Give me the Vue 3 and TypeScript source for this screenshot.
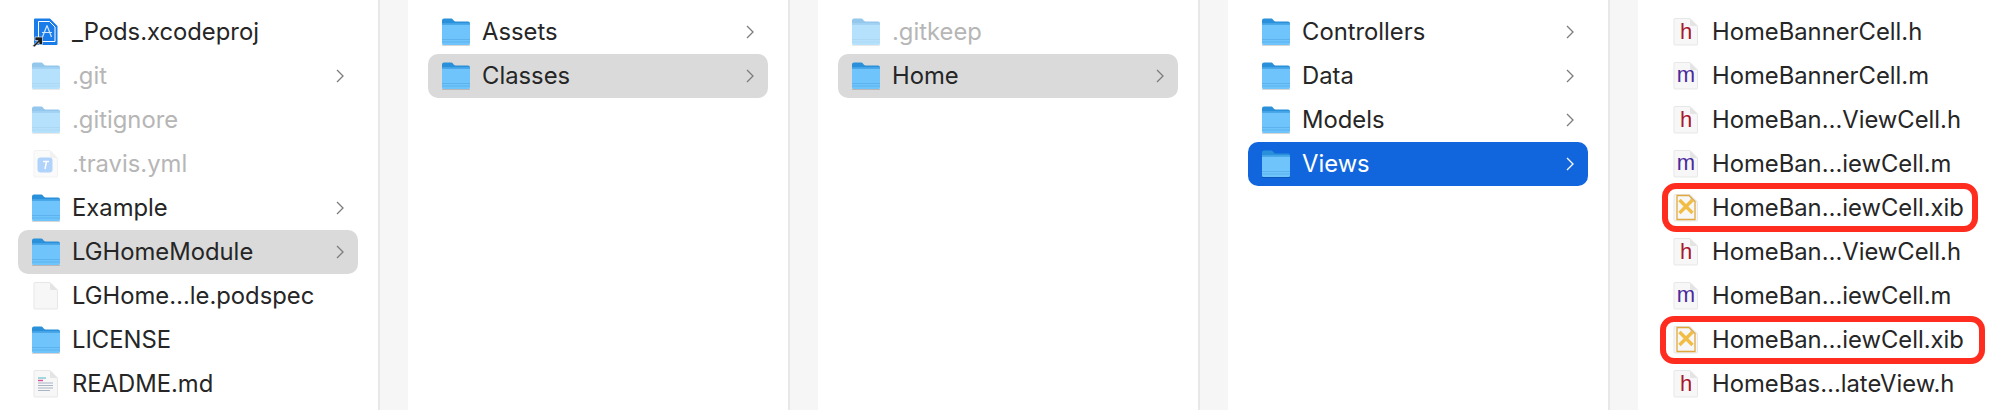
<script setup lang="ts">
type Kind = 'folder' | 'doc' | 'h' | 'm' | 'xib' | 'xcode' | 'yml' | 'readme'

interface Row {
  name: string
  kind: Kind
  arrow?: boolean
  muted?: boolean
  state?: 'gray' | 'blue'
  mark?: 'one' | 'two'
}

const columns: Row[][] = [
  [
    { name: '_Pods.xcodeproj', kind: 'xcode' },
    { name: '.git', kind: 'folder', arrow: true, muted: true },
    { name: '.gitignore', kind: 'folder', muted: true },
    { name: '.travis.yml', kind: 'yml', muted: true },
    { name: 'Example', kind: 'folder', arrow: true },
    { name: 'LGHomeModule', kind: 'folder', arrow: true, state: 'gray' },
    { name: 'LGHome…le.podspec', kind: 'doc' },
    { name: 'LICENSE', kind: 'folder' },
    { name: 'README.md', kind: 'readme' }
  ],
  [
    { name: 'Assets', kind: 'folder', arrow: true },
    { name: 'Classes', kind: 'folder', arrow: true, state: 'gray' }
  ],
  [
    { name: '.gitkeep', kind: 'folder', muted: true },
    { name: 'Home', kind: 'folder', arrow: true, state: 'gray' }
  ],
  [
    { name: 'Controllers', kind: 'folder', arrow: true },
    { name: 'Data', kind: 'folder', arrow: true },
    { name: 'Models', kind: 'folder', arrow: true },
    { name: 'Views', kind: 'folder', arrow: true, state: 'blue' }
  ],
  [
    { name: 'HomeBannerCell.h', kind: 'h' },
    { name: 'HomeBannerCell.m', kind: 'm' },
    { name: 'HomeBan…ViewCell.h', kind: 'h' },
    { name: 'HomeBan…iewCell.m', kind: 'm' },
    { name: 'HomeBan…iewCell.xib', kind: 'xib', mark: 'one' },
    { name: 'HomeBan…ViewCell.h', kind: 'h' },
    { name: 'HomeBan…iewCell.m', kind: 'm' },
    { name: 'HomeBan…iewCell.xib', kind: 'xib', mark: 'two' },
    { name: 'HomeBas…lateView.h', kind: 'h' }
  ]
]

const docPath = 'M3 1.5H18L25.5 9V27a1 1 0 0 1-1 1H3a1 1 0 0 1-1-1V2.5a1 1 0 0 1 1-1Z'
</script>

<template>
  <div class="finder">
    <section v-for="(col, i) in columns" :key="i" class="column" :class="{ first: i === 0 }">
      <div
        v-for="row in col"
        :key="row.name + row.kind + row.mark"
        class="row"
        :class="[row.state, { muted: row.muted }]"
      >
        <svg class="icon" width="28" height="30" viewBox="0 0 28 30">
          <template v-if="row.kind === 'folder'">
            <path d="M0 3.5A2 2 0 0 1 2 1.5H9.5C11 1.5 11.5 4.5 13.5 4.5H26A2 2 0 0 1 28 6.5V12H0Z" fill="#2a90da" />
            <path d="M0 7.5H28V26.5A1.5 1.5 0 0 1 26.5 28H1.5A1.5 1.5 0 0 1 0 26.5Z" fill="#6fc5fb" />
            <path d="M0 6.2H28V7.8H0Z" fill="#4aa8ea" />
            <path d="M0 22.5H28M0 25H28" stroke="#5cb3ee" stroke-width="1" />
            <path d="M0 28.5H28" stroke="#000" stroke-opacity=".16" stroke-width="1" />
          </template>
          <template v-else-if="row.kind === 'xcode'">
            <path :d="docPath" fill="#1a7ce8" />
            <path d="M6.5 4.5H17.5L23 10V24.5H6.5Z" fill="none" stroke="#fff" stroke-width="1" />
            <path d="M15 8.5L10.5 20M15 8.5L19.5 20M10 15.5H20" fill="none" stroke="#cfe6ff" stroke-width="1.2" />
            <path d="M0.5 29L6 23.5H3V20H10.5V27.5H7V25.5L2.5 30Z" fill="#1c1c1c" stroke="#fff" stroke-width=".6" />
          </template>
          <template v-else>
            <path :d="docPath" fill="#f7f7f7" stroke="#dedede" stroke-width=".7" />
            <path d="M18 1.5V8a1 1 0 0 0 1 1h6.5Z" fill="#e4e4e4" />
            <text v-if="row.kind === 'h'" x="14" y="22" class="letter h">h</text>
            <text v-if="row.kind === 'm'" x="14" y="21" class="letter m">m</text>
            <template v-if="row.kind === 'xib'">
              <path d="M5 2.5H17L23 8.5V26.5H5Z" fill="none" stroke="#dfa93f" stroke-width="1.3" />
              <path d="M7.5 7L20.5 20M20.5 7L7.5 20" stroke="#f1bd45" stroke-width="3.4" />
            </template>
            <template v-if="row.kind === 'yml'">
              <rect x="5.5" y="8.5" width="15" height="15" rx="3" fill="#62a8f8" />
              <path d="M11 12.5H17M14.5 12.5L13 20" stroke="#fff" stroke-width="1.5" fill="none" />
            </template>
            <template v-if="row.kind === 'readme'">
              <path d="M6 9H14" stroke="#4fb6c6" stroke-width="1" />
              <path d="M6 11.5H11" stroke="#e0509a" stroke-width="1.4" />
              <path d="M6 14H21M6 16.5H21M6 19H21M6 21.5H18" stroke="#a9b4c4" stroke-width="1" />
            </template>
          </template>
        </svg>
        <span class="name">{{ row.name }}</span>
        <svg v-if="row.arrow" class="chevron" width="8" height="14" viewBox="0 0 8 14">
          <path d="M1 1L7 7L1 13" fill="none" stroke="currentColor" stroke-width="1.3" />
        </svg>
        <div v-if="row.mark" class="mark" :class="row.mark"></div>
      </div>
    </section>
  </div>
</template>

<style scoped>
.finder {
  display: flex;
  height: 410px;
  overflow: hidden;
  background: #f6f6f6;
  font-family: Inter, "Liberation Sans", sans-serif;
}

.column {
  flex: none;
  box-sizing: border-box;
  width: 380px;
  height: 410px;
  margin-right: 30px;
  padding: 10px 20px;
  background: #fff;
  box-shadow: 1px 0 0 1px #e8e8e8;
}

.column.first {
  width: 378px;
  padding-left: 18px;
}

.row {
  position: relative;
  display: flex;
  align-items: center;
  height: 44px;
  padding: 0 14px;
  border-radius: 10px;
  color: #262626;
  font-size: 23.8px;
}

.row.gray {
  background: #dadada;
}

.row.blue {
  background: #1166dd;
  color: #fff;
}

.row.muted .name {
  color: #b6b6b6;
}

.row.muted .icon {
  opacity: 0.5;
}

.icon {
  flex: none;
  margin-right: 12px;
}

.name {
  padding-bottom: 2px;
  white-space: nowrap;
}

.chevron {
  margin-left: auto;
  color: #7c7c7c;
}

.row.blue .chevron {
  color: #fff;
}

.letter {
  font-family: "Liberation Sans", sans-serif;
  font-size: 22px;
  text-anchor: middle;
}

.letter.h {
  fill: #a9172f;
}

.letter.m {
  fill: #4b2a9c;
}

.mark {
  position: absolute;
  box-sizing: border-box;
  border: 6px solid #ff2d20;
  border-radius: 14px;
}

.mark.one {
  left: 4px;
  top: -3px;
  width: 316px;
  height: 49px;
}

.mark.two {
  left: 2px;
  top: -2px;
  width: 325px;
  height: 48px;
}
</style>
